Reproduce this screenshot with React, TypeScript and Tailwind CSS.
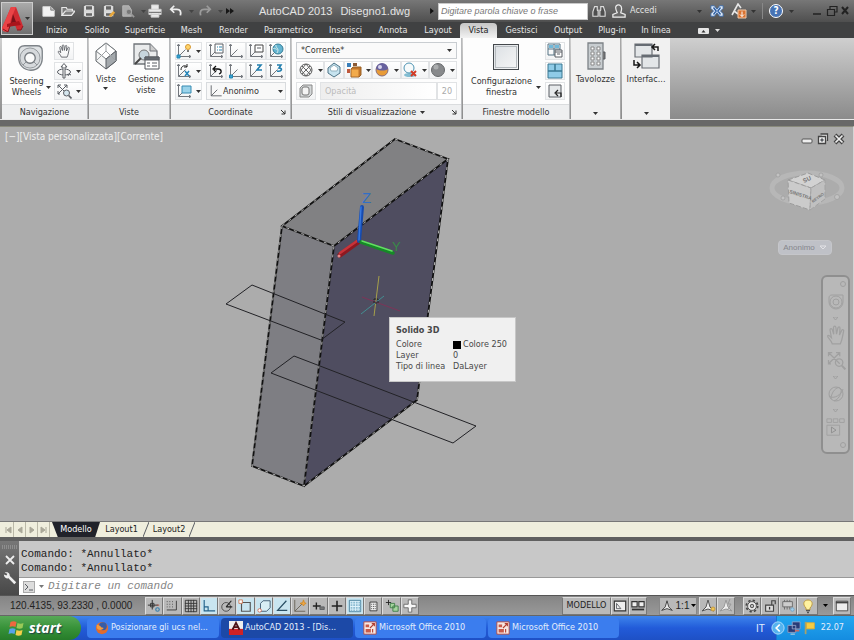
import type { ReactNode } from 'react';
import clsx from 'clsx';

const ui = 'font-["DejaVu_Sans_Condensed","DejaVu_Sans",sans-serif]';

const menuTabs = [
  { label: 'Inizio', width: 'w-[39px]' },
  { label: 'Solido', width: 'w-[42px]' },
  { label: 'Superficie', width: 'w-[54px]' },
  { label: 'Mesh', width: 'w-[39px]' },
  { label: 'Render', width: 'w-[45px]' },
  { label: 'Parametrico', width: 'w-[65px]' },
  { label: 'Inserisci', width: 'w-[49px]' },
  { label: 'Annota', width: 'w-[46px]' },
  { label: 'Layout', width: 'w-[44px]' },
  { label: 'Vista', width: 'w-[37px]', active: true },
  { label: 'Gestisci', width: 'w-[49px]' },
  { label: 'Output', width: 'w-[44px]' },
  { label: 'Plug-in', width: 'w-[44px]' },
  { label: 'In linea', width: 'w-[44px]' },
];

function Svg({ size = 'size-4', box = '0 0 16 16', children }: { size?: string; box?: string; children: ReactNode }) {
  return (
    <svg viewBox={box} className={clsx('block shrink-0', size)} fill="none" stroke="#5a5e64" strokeWidth="1">
      {children}
    </svg>
  );
}

function Caret({ className = 'text-[#333]' }: { className?: string }) {
  return (
    <svg viewBox="0 0 5 3" className={clsx('block h-[3px] w-[5px] shrink-0', className)}>
      <path d="M0 0h5L2.5 3z" fill="currentColor" />
    </svg>
  );
}

/* ---------- small drawings ---------- */

const Axes = ({ children }: { children?: ReactNode }) => (
  <Svg>
    <path d="M2.5 1.5v12h12M2.5 13.5l7-7M1.2 3l1.3-2 1.3 2M13 12.2l2 1.3-2 1.3" stroke="#73777d" />
    {children}
  </Svg>
);

const Hand = () => (
  <path d="M5 15C4 12 1 10 1.3 8.7c.6-1 2 .2 3 1.3L3.2 4c0-1.4 1.5-1.5 1.9-.2L6.2 7.5 6 2c.2-1.4 1.7-1.4 1.9 0l.5 5.3L9.5 2.4c.4-1.3 1.8-1 1.7.3L10.8 8l1.8-3.8c.6-1 1.8-.4 1.5.7C13.2 9 13 12 11.5 15z" />
);

const Wheel = () => (
  <>
    <path d="M3 15V9c0-5 2-7 7-7h14c4 0 6 2 6 6v8c0 8-5 14-13 14C9 30 3 24 3 15z" fill="#dfe2e4" stroke="#7d8287" strokeWidth="1.5" />
    <circle cx="16" cy="16" r="11.5" fill="#d6d9dc" stroke="#8b9095" />
    <circle cx="16" cy="16" r="6" fill="#fafafa" stroke="#74797e" strokeWidth="1.5" />
    <path d="m8 24 4-4m8 0 4 4" stroke="#868b90" />
  </>
);

const ZoomExtents = () => (
  <>
    <path d="m2 2 9 9M11 2 2 11M2 5V2h3M8 2h3v3M2 8v3h2" />
    <circle cx="10.5" cy="10" r="3" fill="#d5e6ee" />
    <path d="m12.7 12.5 2.8 3" strokeWidth="1.6" />
  </>
);

const Orbit = () => (
  <>
    <ellipse cx="8" cy="9" rx="6.5" ry="3" />
    <path d="M7 15V4H5l3-3.5L11 4H9v11z" fill="#fff" />
    <path d="m12 13 1-2 2 1" />
  </>
);

function IconButton({ label, children, className, caret }: { label: string; children: ReactNode; className?: string; caret?: boolean }) {
  return (
    <button
      aria-label={label}
      className={clsx('flex h-[18px] items-center justify-center gap-1 border border-[#e1e3e5] bg-gradient-to-b from-white to-[#f2f3f4]', className)}
    >
      {children}
      {caret && <Caret />}
    </button>
  );
}

function Panel({ title, width, children, arrow, launcher }: { title: string; width: string; children: ReactNode; arrow?: boolean; launcher?: boolean }) {
  return (
    <section className={clsx('flex shrink-0 flex-col border-r border-[#b7b9bb] bg-[#fdfdfd]', width)}>
      <div className="flex flex-1 px-1 pt-1">{children}</div>
      <h2 className="relative flex h-[15px] items-center justify-center border-t border-[#dadcde] bg-[#eeeff0] text-[#333]">
        {title}
        {arrow && <Caret className="ml-1" />}
        {launcher && (
          <button aria-label={`Opzioni ${title}`} className="absolute right-1 bottom-1">
            <Svg size="size-1.5" box="0 0 6 6">
              <path d="m1 1 4 4M5 1.5V5H1.5" stroke="#333" />
            </Svg>
          </button>
        )}
      </h2>
    </section>
  );
}

function TitleBar() {
  return (
    <header className="flex h-[22px] items-center bg-gradient-to-b from-[#777] to-[#4f4f4f] pl-[42px] text-[#e4e4e4]">
      <div className="flex w-[202px] items-center">
        <button aria-label="Nuovo" className="w-[19px]">
          <Svg size="size-3.5"><path d="M1 3h9l4 4v7H1z" fill="#f2f2f2" stroke="#ddd" /><path d="M10 3v4h4" fill="#bbb" stroke="#777" /></Svg>
        </button>
        <button aria-label="Apri" className="w-[21px]">
          <Svg size="size-3.5"><path d="M1 13V4h5l1 2h6v2M1 13l4-5h11l-4 5z" fill="#7c7c7c" stroke="#e8e8e8" strokeWidth="1.4" /></Svg>
        </button>
        <button aria-label="Salva" className="w-[20px]">
          <Svg size="size-3.5"><path d="M1.5 1.5h13v13h-13z" fill="#d8d8d8" stroke="#555" /><path d="M4 2h8v5H4zM4 10h8v4H4z" fill="#666" stroke="#eee" /></Svg>
        </button>
        <button aria-label="Salva con nome" className="w-[19px]">
          <Svg size="size-3.5"><path d="M1.5 1.5h12v13h-12z" fill="#d8d8d8" stroke="#555" /><path d="M4 2h7v5H4zM4 10h7v4H4z" fill="#666" stroke="#eee" /><path d="m9 14 5-5" stroke="#e7a73c" strokeWidth="3" /></Svg>
        </button>
        <button aria-label="Apri da dispositivo" className="flex w-[27px] items-center gap-1.5">
          <Svg size="size-3.5"><path d="M2 2h7l3 5v7H2z" fill="#aaa" stroke="#bbb" /><circle cx="9" cy="9" r="3" fill="#777" stroke="#aaa" /><path d="m11 11 4 4" stroke="#999" strokeWidth="2" /></Svg>
          <Caret className="text-[#444]" />
        </button>
        <button aria-label="Stampa" className="w-[21px]">
          <Svg size="size-3.5"><path d="M4 6V1h8v5M1 6h14v6H1zM3.5 10h9v5h-9z" fill="#e9e9e9" stroke="#ccc" /><path d="M1 9.5h14" stroke="#555" /></Svg>
        </button>
        <button aria-label="Annulla" className="flex w-[29px] items-center gap-1.5">
          <Svg size="size-3.5"><path d="M3 6h6c4 0 5 3 4 7M6 2 2 6l4 4" stroke="#eee" strokeWidth="2" /></Svg>
          <Caret className="text-[#444]" />
        </button>
        <button aria-label="Ripeti" className="flex w-[28px] items-center gap-1.5">
          <Svg size="size-3.5"><path d="M13 6H7c-4 0-5 3-4 7m7-11 4 4-4 4" stroke="#9b9b9b" strokeWidth="2" /></Svg>
          <Caret className="text-[#444]" />
        </button>
        <button aria-label="Altri comandi" className="w-[16px]">
          <Svg size="size-2" box="0 0 8 8"><path d="m0 1 4 3-4 3zM4 1l4 3-4 3z" fill="#161616" stroke="none" /></Svg>
        </button>
      </div>
      <div className='ml-[15px] flex w-[179px] items-center font-["Liberation_Sans",sans-serif] text-[11px] whitespace-nowrap'>
        <span>AutoCAD 2013</span>
        <span className="ml-2">Disegno1.dwg</span>
        <svg viewBox="0 0 5 8" className="mr-1 ml-auto h-1.5 w-1"><path d="M0 0l5 4-5 4z" fill="#111" /></svg>
      </div>
      <input
        aria-label="Cerca"
        placeholder="Digitare parola chiave o frase"
        className='h-[17px] w-[150px] border border-[#c9c9c9] bg-white px-0.5 font-["Liberation_Sans",sans-serif] text-[9px] italic placeholder:text-[#777]'
      />
      <button aria-label="Trova" className="ml-1">
        <Svg size="h-4 w-3.5"><path d="M3 3h3v4l1 1v6H1V9zM10 3h3l2 6v5H9V8l1-1z" fill="#4e4e4e" stroke="#ddd" strokeWidth="1.3" /><path d="M7 7h2" stroke="#ddd" /></Svg>
      </button>
      <button className="ml-1.5 flex items-center gap-1">
        <Svg size="size-3.5"><path d="M5 2c2-2 6-1 6 3 0 3-1 4-1 5l5 2v3H1v-3l5-2C5 8 3 4 5 2z" fill="#6a6a6a" stroke="#eee" strokeWidth="1.4" /></Svg>
        Accedi
      </button>
      <div className="ml-auto flex items-center">
        <Caret className="mr-2 text-[#333]" />
        <button aria-label="Exchange" className="w-[21px]">
          <Svg size="size-3.5"><path d="M1 2h4l3 4 3-4h4v3l-3 3 3 3v3h-4l-3-4-3 4H1v-3l3-3-3-3z" fill="#dfe9f5" stroke="#3868a8" /><path d="m4 4 3 4-3 4M12 4 9 8l3 4" stroke="#2a5da4" strokeWidth="1.6" /></Svg>
        </button>
        <button aria-label="Connessione" className="flex w-[25px] items-center gap-1">
          <Svg><path d="M1 12 7 1l3 4M3 8l4 3" stroke="#e7e7e7" strokeWidth="1.6" /><path d="M7 7h8v8H7z" fill="#db7330" stroke="#f2c9a8" /><path d="M11 8.5v5m-2-2 2 2 2-2" stroke="#fff" /></Svg>
          <Caret />
        </button>
        <span className="mx-1.5 h-4 border-l border-[#888]" />
        <button aria-label="Guida" className="flex w-[43px] items-center gap-1.5">
          <span className="flex size-3.5 items-center justify-center rounded-full border border-white bg-[#4773b4] text-[10px] leading-none font-bold text-white">?</span>
          <Caret />
        </button>
        <button aria-label="Riduci a icona" className="w-[14px]"><Svg size="size-3" box="0 0 12 12"><path d="M1 9h8" stroke="#222" strokeWidth="1.5" /></Svg></button>
        <button aria-label="Ripristina" className="w-[14px]"><Svg size="size-3" box="0 0 12 12"><path d="M4 4V1.5h7V7H8.5M1.5 4.5h7v6h-7z" stroke="#222" strokeWidth="1.2" /></Svg></button>
        <button aria-label="Chiudi" className="w-[14px]"><Svg size="size-3" box="0 0 12 12"><path d="m2 2 6 7m0-7L2 9" stroke="#222" strokeWidth="2" /></Svg></button>
      </div>
    </header>
  );
}

function MenuBar() {
  return (
    <nav className="flex h-4 items-end bg-[#404142] pl-[37px] text-[#e5e5e5]">
      {menuTabs.map((tab) => (
        <button
          key={tab.label}
          className={clsx('flex h-[15px] shrink-0 items-center justify-center whitespace-nowrap', tab.width, tab.active && 'rounded-t-sm bg-gradient-to-b from-[#c6c6c6] to-[#f2f2f2] text-[#222]')}
        >
          {tab.label}
        </button>
      ))}
      <button aria-label="Riduci barra multifunzione" className="ml-5 flex h-[15px] items-center gap-1.5">
        <Svg size="h-1.5 w-[11px]" box="0 0 11 6"><rect width="11" height="6" rx="1" fill="#e6e6e6" stroke="none" /><path d="M3.5 4.5h4L5.5 2z" fill="#333" stroke="none" /></Svg>
        <Caret className="text-[#ddd]" />
      </button>
    </nav>
  );
}

function Ribbon() {
  return (
    <div className="flex h-[82px] gap-px border-b border-[#e8e8e8] bg-gradient-to-b from-[#cfcfcf] to-[#8b8b8b] pl-0.5 leading-[11px] text-[#333]">
      <Panel title="Navigazione" width="w-[86px]">
        <button className="flex w-[50px] flex-col items-center pt-0.5">
          <Svg size="size-7" box="0 0 32 32"><Wheel /></Svg>
          <span className="mt-1 flex items-center gap-0.5">
            <span>Steering<br />Wheels</span>
            <Caret />
          </span>
        </button>
        <div className="flex w-[29px] flex-col gap-0.5">
          <IconButton label="Pan" className="w-5"><Svg size="size-3.5"><Hand /></Svg></IconButton>
          <IconButton label="Orbita" className="w-[29px]" caret><Svg><Orbit /></Svg></IconButton>
          <IconButton label="Zoom" className="w-[29px]" caret><Svg><ZoomExtents /></Svg></IconButton>
        </div>
      </Panel>

      <Panel title="Viste" width="w-[81px]">
        <button className="flex w-[27px] flex-col items-center">
          <Svg size="h-7 w-6" box="0 0 24 28">
            <path d="M12 1 2 9v10l10 8 10-8V9z" fill="#f4f5f5" stroke="#5b6064" />
            <path d="M12 1 2 9l10 8 10-8z" fill="#fff" stroke="#777c80" />
            <path d="M12 17v10l10-8V9z" fill="#a4a9ad" />
            <path d="M12 1v8L2 19M12 9l10 10" stroke="#9da1a4" />
          </Svg>
          <span className="mt-1">Viste</span>
          <Caret className="mt-0.5" />
        </button>
        <button className="ml-2 flex w-10 flex-col items-center">
          <Svg size="size-7" box="0 0 28 28">
            <path d="M2 2h16l7 7v13H2z" fill="#e9ebec" stroke="#70757a" strokeWidth="1.3" />
            <path d="M18 2v7h7" fill="#ccc" stroke="#70757a" />
            <circle cx="12" cy="13" r="5" fill="#c6d5dd" stroke="#777" />
            <path d="m9 16-6 6" stroke="#444" strokeWidth="2" />
            <path d="M13 15h14v12H13z" fill="#fff" stroke="#4e5358" />
            <path d="M13 15h14v3H13z" fill="#646a70" />
            <path d="M15 21h3m2 0h5m-10 3h3m2 0h5" />
          </Svg>
          <span className="mt-1 text-center">Gestione<br />viste</span>
        </button>
      </Panel>

      <Panel title="Coordinate" width="w-[120px]" launcher>
        <div className="flex w-[28px] flex-col gap-0.5">
          <IconButton label="Icona UCS" caret><Axes><path d="M1 12h3v3H1z" fill="#39a3d2" stroke="#2387b5" /><circle cx="12" cy="4" r="2.5" fill="#ffd56c" stroke="#d69833" /><path d="M11 7h2v2h-2z" fill="#777" stroke="none" /></Axes></IconButton>
          <IconButton label="Ruota X" caret><Axes><path d="M5 7c0-5 5-5 6-3m-3 0h3V1" stroke="#222" /><path d="m9 8 4 5m0-5-4 5" stroke="#2384b9" strokeWidth="1.5" /></Axes></IconButton>
          <IconButton label="Vista UCS" caret><Axes><path d="M6 3h9v7H6z" fill="#9bd3ea" stroke="#378bb2" /></Axes></IconButton>
        </div>
        <div className="ml-1 flex flex-1 flex-col gap-0.5">
          <div className="flex justify-between">
            <IconButton label="UCS con nome" className="w-5"><Axes><path d="M7 1h8v9H7z" fill="#fff" /><path d="M9 4h1m1 0h3M9 7h1m1 0h3" stroke="#2b83ad" /></Axes></IconButton>
            <div className="flex">
              <IconButton label="UCS" className="w-5"><Axes /></IconButton>
              <IconButton label="UCS origine" className="w-5"><Axes><path d="M7 2h8v7H7z" fill="#fff" stroke="#444" /><path d="M9 5h4" /></Axes></IconButton>
              <IconButton label="Globale" className="w-5"><Axes><circle cx="10" cy="6" r="5" fill="#64b4d1" stroke="#347c95" /><path d="M8 2c-1 3 4 3 1 8M5 6c2-2 3 1 4 0" stroke="#d7eeeb" /></Axes></IconButton>
            </div>
          </div>
          <div className="flex justify-between">
            <IconButton label="UCS precedente" className="w-5"><Axes><path d="M6 6h4c4 0 4 4 1 5M8 3 5 6l3 3" stroke="#111" strokeWidth="1.3" /></Axes></IconButton>
            <div className="flex">
              <IconButton label="Origine" className="w-5"><Axes><path d="M1.5 12h3v3h-3z" fill="#39a3d2" stroke="#2387b5" /></Axes></IconButton>
              <IconButton label="Asse Z" className="w-5"><Axes><path d="M9 2h4L9 7h5" stroke="#227ead" strokeWidth="1.6" /></Axes></IconButton>
              <IconButton label="3 punti" className="w-5"><Axes><path d="M9 2h4l-2 3c4 0 3 4-2 3" stroke="#227ead" strokeWidth="1.6" /></Axes></IconButton>
            </div>
          </div>
          <div className="flex h-[18px] items-center border border-[#d8dbde] bg-[#f8f8f8] px-0.5">
            <Svg size="size-3.5"><path d="M2.5 1.5v12h12M2.5 13.5l7-7" /></Svg>
            <select aria-label="UCS corrente" className="min-w-0 flex-1 appearance-none bg-transparent"><option>Anonimo</option></select>
            <Caret />
          </div>
        </div>
      </Panel>

      <Panel title="Stili di visualizzazione" width="w-[170px]" arrow launcher>
        <div className="flex flex-1 flex-col gap-0.5">
          <div className="flex h-[17px] items-center border border-[#c9cdd1] bg-[#fafafa] px-1">
            <select aria-label="Stile di visualizzazione" className="flex-1 appearance-none bg-transparent"><option>*Corrente*</option></select>
            <Caret />
          </div>
          <div className="flex h-[19px]">
            <IconButton label="Raggi X" className="flex-1" caret><Svg><circle cx="8" cy="8" r="6" stroke="#555" /><path d="M8 2 3 8l5 6 5-6zM4 4l8 8m0-8-8 8" stroke="#666" /></Svg></IconButton>
            <IconButton label="Isolinee" className="w-5"><Svg><path d="m8 1 6 4v6l-6 4-6-4V6z" fill="#c6e3ef" stroke="#4d7386" /><path d="m4 6 4-3 4 3-1 3H5z" fill="#fff" stroke="#93b3c1" /></Svg></IconButton>
            <IconButton label="Colori faccia" className="flex-1" caret><Svg><path d="M1 1h4v4H1z" fill="#397fba" stroke="none" /><path d="M7 1h4v3H7z" fill="#8a5a36" stroke="none" /><path d="M1 7h3v4H1z" fill="#be583c" stroke="none" /><path d="m5 7 2-2h8v8l-2 2H5z" fill="#c0752b" stroke="#9a6327" /><path d="M5.5 7.500h7v7h-7z" fill="#f2ab4c" stroke="none" /></Svg></IconButton>
            <IconButton label="Materiali" className="flex-1" caret><Svg><circle cx="8" cy="8" r="6" fill="#e89b37" stroke="#896d77" /><path d="M2 7a6 6 0 0 1 12 0c-3 2-8 2-12 0z" fill="#68629f" stroke="none" /><circle cx="6" cy="5" r="2" fill="#d8d5ed" stroke="none" /></Svg></IconButton>
            <IconButton label="Ombre" className="flex-1" caret><Svg><ellipse cx="8" cy="13" rx="6" ry="2" fill="#82bdd2" stroke="none" /><circle cx="7" cy="6" r="5" fill="#f6fafb" stroke="#4d93b2" /><path d="m9 9 5 5m0-5-5 5" stroke="#d33b25" strokeWidth="2" /></Svg></IconButton>
            <IconButton label="Riflessi" className="flex-1" caret><Svg><circle cx="8" cy="8" r="6.5" fill="#888a8c" stroke="#66696b" /><circle cx="6" cy="5" r="2.5" fill="#acaeaf" stroke="none" /></Svg></IconButton>
          </div>
          <div className="flex h-[18px] gap-1">
            <IconButton label="Trasparenza" className="w-5"><Svg><path d="m2 5 3-3h9v9l-3 3H2z" fill="#d4d7d8" stroke="#888" /><rect x="4" y="4" width="7" height="8" rx="2" fill="#f4f4f4" stroke="#777" /></Svg></IconButton>
            <label htmlFor="opacity" className="flex flex-1 items-center border border-[#e1e3e5] bg-gradient-to-r from-[#eee] to-white pl-1 text-[#bbb]">Opacità</label>
            <input id="opacity" defaultValue="20" className="-ml-1 w-5 border border-[#e1e3e5] bg-white text-center text-[#aaa]" />
          </div>
        </div>
      </Panel>

      <Panel title="Finestre modello" width="w-[107px]">
        <button className="flex flex-1 flex-col items-center pt-0.5">
          <span className="size-[26px] border border-[#44484c] bg-gradient-to-br from-[#dce0e4] to-[#f6f6f6] outline-1 -outline-offset-3 outline-[#b5babe]" />
          <span className="mt-1.5 flex items-center gap-1">
            <span className="text-center">Configurazione<br />finestra</span>
            <Caret />
          </span>
        </button>
        <div className="flex w-[20px] flex-col gap-0.5">
          <IconButton label="Con nome"><Svg><path d="M1 1h12v11H1zM1 6h12M7 1v11" stroke="#547383" /><path d="M2 2h4v3H2zM8 2h4v3H8z" fill="#72b8d8" stroke="none" /><path d="M8 7h7v7H8z" fill="#fff" /><path d="M8 9h7m-5 2h3" /></Svg></IconButton>
          <IconButton label="Unisci"><Svg><path d="M1 1h14v14H1z" fill="#8fcbe7" stroke="#3a7893" /><path d="M1 8h14M8 1v7" stroke="#3a7893" strokeWidth="1.5" /></Svg></IconButton>
          <IconButton label="Ripristina"><Svg><path d="M2 2h12v12H2z" fill="#e6e9eb" /><path d="M9 10h5v4M11 7l-3 3 3 3" stroke="#222" strokeWidth="1.2" /></Svg></IconButton>
        </div>
      </Panel>

      <button className="flex w-[50px] shrink-0 flex-col items-center border-r border-[#a7a7a7] bg-[#f1f1f1] pt-1 pb-1">
        <Svg size="h-7 w-5" box="0 0 20 28">
          <path d="M2 1h15v26H2z" fill="#c8cdd0" stroke="#7d8387" strokeWidth="1.3" /><path d="M17 10h2v7h-2" fill="#777" />
          <path d="M5 5h3v3H5zm6 0h3v3h-3zM5 10h3v3H5zm6 0h3v3h-3zM5 15h3v3H5zm6 0h3v3h-3zM5 20h3v3H5zm6 0h3v3h-3z" fill="#fff" stroke="#888" />
        </Svg>
        <span className="mt-1">Tavolozze</span>
        <span className="mt-auto"><Caret /></span>
      </button>
      <button className="flex w-[48px] shrink-0 flex-col items-center bg-[#f1f1f1] pt-1 pb-1">
        <Svg size="size-7" box="0 0 28 28">
          <path d="M3 2h17v13H3zM10 13h17v13H10z" fill="#e3e6e8" stroke="#6a6f75" strokeWidth="1.2" />
          <path d="M3 2h17v2H3zM10 13h17v2H10z" fill="#666c73" stroke="none" />
          <path d="M26 9V5h-5m2-3-3 3 3 3M2 18v5h5m-2-3 3 3-3 3" stroke="#171717" strokeWidth="1.5" />
        </Svg>
        <span className="mt-1">Interfac...</span>
        <span className="mt-auto"><Caret /></span>
      </button>
    </div>
  );
}

function SolidDrawing() {
  return (
    <svg viewBox="0 127 854 394" className="absolute top-0 left-0 h-[394px] w-[854px]" fill="none">
      <path d="M395 139 448 159 334 246 282 226z" fill="#818183" />
      <path d="m282 226 52 20-30 240-52-20z" fill="#7e7e83" />
      <path d="M334 246 448 159 417 400 304 486z" fill="#4f4d60" />
      <g stroke="#111" strokeWidth="1.8">
        <path d="M395 139 448 159 334 246 282 226z" />
        <path d="m282 226-30 240 52 20 30-240M448 159l-31 241-113 86" />
      </g>
      <g stroke="#dedede" strokeWidth="0.8" strokeDasharray="3 5">
        <path d="M395 139 448 159 334 246 282 226z" />
        <path d="m282 226-30 240 52 20 30-240M448 159l-31 241-113 86" />
      </g>
      <g stroke="#222226">
        <path d="m226 304 26-19 93 37-24 18z" />
        <path d="m271 373 23-17 182 70-23 17z" />
      </g>
      <g strokeLinecap="round">
        <path d="m358 242-18 13" stroke="#8e1820" strokeWidth="5" />
        <path d="m357 241-17 12" stroke="#c83339" strokeWidth="2.5" />
        <circle cx="339" cy="256" r="1.5" fill="#e58b8b" />
        <path d="m359 241 3-34" stroke="#164bb0" strokeWidth="4" />
        <path d="m359 240 2-33" stroke="#3778df" strokeWidth="1.5" />
        <path d="m361 242 32 11" stroke="#168927" strokeWidth="3.500" />
        <path d="m362 241 30 10" stroke="#63df62" strokeWidth="1.5" />
      </g>
      <text x="362" y="203" fill="#316fc5" fontFamily="Liberation Sans, sans-serif" fontSize="15">Z</text>
      <text x="392" y="251" fill="#398a48" fontFamily="Liberation Sans, sans-serif" fontSize="13">Y</text>
      <path d="m379 276-5 40" stroke="#a6a04a" />
      <path d="m361 314 23-18" stroke="#438f92" />
      <path d="m362 297 38 14" stroke="#7d3458" />
      <path d="M374 299h4v4h-4z" stroke="#222" strokeDasharray="2 1" />
    </svg>
  );
}

function ViewCube() {
  return (
    <svg viewBox="0 0 80 60" className="absolute top-[33px] right-[6px] h-[60px] w-20" fill="none">
      <ellipse cx="40" cy="28" rx="35" ry="15" stroke="#b7b7b7" strokeWidth="5" />
      <path d="m21 20 20-7 17 7v19l-15 11-21-7z" fill="#c9c9c9" />
      <path d="m21 20 20-7 17 7-14 8z" fill="#d2d2d2" stroke="#9c9c9c" strokeDasharray="5 2" />
      <path d="m21 20 23 8-1 22-21-7z" fill="#cbcbcb" stroke="#9c9c9c" strokeDasharray="5 2" />
      <path d="m44 28 14-8v19L43 50z" fill="#c0c0c0" stroke="#a2a2a2" strokeDasharray="5 2" />
      <g fill="#777" fontFamily="Liberation Sans, sans-serif" fontWeight="bold">
        <text x="22" y="33" fontSize="5" transform="rotate(18 22 33)">SINISTRA</text>
        <text x="46" y="43" fontSize="4" transform="rotate(-36 46 43)">RETRO</text>
        <text x="37" y="23" fontSize="6" transform="rotate(-25 37 23)">SU</text>
      </g>
      <g fill="#c2c2c2" stroke="#9c9c9c" strokeWidth="0.7">
        <circle cx="11" cy="15" r="2" /><circle cx="54" cy="15" r="2" /><circle cx="70" cy="37" r="2.5" /><circle cx="16" cy="38" r="2" />
      </g>
    </svg>
  );
}

function NavigationBar() {
  return (
    <div className="absolute top-[148px] right-[3px] flex h-[179px] w-[29px] flex-col items-center justify-between rounded-md border-2 border-[#8f8f8f] bg-[#b8b8b8] py-1 [&_circle]:fill-none [&_path]:fill-none [&_svg]:stroke-[#a0a0a0]">
      <button aria-label="Chiudi barra" className="mr-0.5 self-end"><Svg size="size-1.5" box="0 0 6 6"><circle cx="3" cy="3" r="2.5" /></Svg></button>
      <button aria-label="Steering Wheels"><Svg size="size-5" box="0 0 20 20"><path d="M3 10V6c0-2 1-3 3-3h11v7a7 7 0 1 1-14 0z" /><circle cx="10" cy="10" r="6" /><circle cx="10" cy="10" r="3" /></Svg></button>
      <Caret className="text-[#999]" />
      <button aria-label="Pan barra"><Svg size="size-5"><Hand /></Svg></button>
      <button aria-label="Zoom barra"><Svg size="size-5"><ZoomExtents /></Svg></button>
      <Caret className="text-[#999]" />
      <button aria-label="Orbita barra"><Svg size="size-5" box="0 0 20 20"><circle cx="10" cy="10" r="7" /><path d="M3 12c5 4 13-2 14-7M5 15c0-7 6-13 9-11s0 11-6 13" /></Svg></button>
      <Caret className="text-[#999]" />
      <button aria-label="ShowMotion"><Svg size="size-5" box="0 0 22 22"><path d="M1 2h5v4H1zM8 2h5v4H8zM15 2h5v4h-5zM1 9h14v11H1z" /><path d="m6 11 5 3.5-5 3z" stroke="#8d8d8d" /></Svg></button>
      <button aria-label="Opzioni barra" className="mr-0.5 self-end"><Svg size="size-1.5" box="0 0 6 6"><circle cx="3" cy="3" r="2.5" /></Svg></button>
    </div>
  );
}

function Viewport() {
  return (
    <main className="relative min-h-[394px] flex-1 overflow-hidden border-t border-r border-[#898a7c] border-r-[#d5d5d5] bg-[#acacac]">
      <SolidDrawing />
      <p className="absolute top-0.5 left-[5px] text-[10px] text-[#f0f0f0]">[−][Vista personalizzata][Corrente]</p>
      <div className="absolute top-1.5 right-2 flex gap-1">
        <button aria-label="Riduci finestra"><Svg size="size-3" box="0 0 12 12"><rect x="1" y="6" width="10" height="4" rx="1" fill="#eee" stroke="#555" /></Svg></button>
        <button aria-label="Ripristina finestra"><Svg size="size-3" box="0 0 12 12"><path d="M3.5 1h7v7M1.5 3.5h7v7h-7z" fill="#eee" stroke="#444" strokeWidth="1.3" /><path d="M4 6h2v2H4z" fill="#555" /></Svg></button>
        <button aria-label="Chiudi finestra"><Svg size="size-3" box="0 0 12 12"><path d="m2 2 8 8m0-8-8 8" stroke="#444" strokeWidth="4" /><path d="m2.5 2.5 7 7m0-7-7 7" stroke="#eee" strokeWidth="1.7" /></Svg></button>
      </div>
      <ViewCube />
      <button className='absolute top-[113px] right-[21px] flex h-[15px] w-[54px] items-center justify-center gap-1 rounded-sm border border-[#c5c6ca] bg-[#bfc1c7] font-["Liberation_Sans",sans-serif] text-[8px] text-[#85868c]'>
        Anonimo <Svg size="h-1.5 w-2" box="0 0 8 6"><path d="M1 1h6L4 4z" stroke="#e2e2e6" /></Svg>
      </button>
      <NavigationBar />
      <div className="absolute top-[190px] left-[389px] h-[65px] w-[127px] border border-[#c7c7c7] bg-[#f0f0f0] px-1.5 pt-1.5 text-[#484848]">
        <h3 className="mb-0.5 leading-[13px] font-bold">Solido 3D</h3>
        <dl className="grid grid-cols-[57px_1fr] leading-[11px] whitespace-nowrap">
          <dt>Colore</dt>
          <dd className="flex items-center gap-0.5"><span className="size-2 bg-black" />Colore 250</dd>
          <dt>Layer</dt>
          <dd>0</dd>
          <dt>Tipo di linea</dt>
          <dd>DaLayer</dd>
        </dl>
      </div>
    </main>
  );
}

function LayoutTabs() {
  return (
    <nav className="flex h-4 shrink-0 items-stretch border-t border-[#777] bg-[#efeedd] pl-[2px] text-[#222]">
      {['m7 1-4 3 4 3zM2 1v6', 'm6 1-4 3 4 3z', 'm2 1 4 3-4 3z', 'm1 1 4 3-4 3zM6 1v6'].map((d, i) => (
        <button key={d} aria-label={['Primo', 'Precedente', 'Successivo', 'Ultimo'][i]} className="flex w-3 items-center justify-center border-r border-[#bbb9a8]">
          <Svg size="size-2" box="0 0 8 8"><path d={d} fill="#aaa899" stroke="#aaa899" /></Svg>
        </button>
      ))}
      <button className="ml-0.5 w-12 bg-[#20222a] text-white [clip-path:polygon(0_0,100%_0,90%_100%,12%_100%)]">Modello</button>
      <button className="w-[43px]">Layout1</button>
      <Svg size="h-[15px] w-1.5" box="0 0 6 15"><path d="M6 0 0 15" /></Svg>
      <button className="w-[40px]">Layout2</button>
      <Svg size="h-[15px] w-1.5" box="0 0 6 15"><path d="M6 0 0 15" /></Svg>
    </nav>
  );
}

function CommandLine() {
  return (
    <section className='flex h-[59px] shrink-0 border-t-4 border-b border-t-[#606060] border-b-[#555] bg-[#c8c8c8] font-["Liberation_Mono",monospace] text-[11px] text-[#222]'>
      <div className="flex w-[19px] flex-col items-center gap-1.5 bg-gradient-to-b from-[#777] to-[#484848] pt-1">
        <Svg size="h-1 w-4" box="0 0 16 4"><path d="M0 1h16M0 3h16" stroke="#aaa" strokeDasharray="1 1" /></Svg>
        <button aria-label="Chiudi riga di comando"><Svg size="size-2.5" box="0 0 10 10"><path d="m1 1 8 8m0-8L1 9" stroke="#eee" strokeWidth="1.8" /></Svg></button>
        <button aria-label="Personalizza"><Svg size="size-3.5"><path d="M5 5 14 14" stroke="#eee" strokeWidth="3" /><path d="M2 2c4-2 7 2 5 5S1 8 1 4l3 1 1-2z" fill="#eee" stroke="none" /></Svg></button>
      </div>
      <div className="flex flex-1 flex-col">
        <div className="flex-1 px-0.5 pt-1.5 leading-[14px]">
          <p>Comando: *Annullato*</p>
          <p>Comando: *Annullato*</p>
        </div>
        <div className="flex h-[18px] items-center border-t border-[#999] bg-white px-1">
          <span className="flex h-3 w-3 items-center justify-center border border-[#aaa] bg-[#ddd]"><Svg size="size-2.5" box="0 0 10 10"><path d="m1 2 3 3-3 3m4 0h4" /></Svg></span>
          <span className="mx-1"><Caret className="text-[#777]" /></span>
          <input aria-label="Comando" placeholder="Digitare un comando" className="flex-1 italic placeholder:text-[#858585]" />
        </div>
      </div>
    </section>
  );
}

const statusIcons: { label: string; on?: boolean; icon: ReactNode }[] = [
  { label: 'Deduci vincoli', icon: <><path d="M1 7h12M6 1v11" stroke="#222" /><path d="M4 5h4v4H4z" stroke="#333" /><circle cx="12" cy="12" r="2" stroke="#357fae" strokeWidth="1.3" /><path d="M11 7h3" stroke="#bd5a48" /></> },
  { label: 'Snap', icon: <><path d="M2 3h9M2 6h9M2 9h9" stroke="#444" strokeDasharray="1 2" /><path d="M2 12.5h11V2" stroke="#333" /></> },
  { label: 'Griglia', icon: <path d="M1.5 1.5h13v13h-13zM1 5h14M1 8h14M1 11h14M5 1v14M8 1v14M11 1v14" stroke="#333" /> },
  { label: 'Orto', on: true, icon: <path d="M2.5 1v12.5H15M2 9h5v5" stroke="#23628a" strokeWidth="1.3" /> },
  { label: 'Polare', icon: <><circle cx="7" cy="9" r="5" stroke="#444" /><path d="m7 9 6-7M7 9h7" stroke="#222" strokeWidth="1.3" /></> },
  { label: 'Osnap', on: true, icon: <><path d="M4 4h10v10H4z" stroke="#555" strokeWidth="1.3" /><path d="M1 1h4v4H1z" fill="#fff" stroke="#cc7752" /></> },
  { label: 'Osnap 3D', on: true, icon: <><path d="m4 5 3-3h8v8l-4 4H4z" fill="#d8eef4" stroke="#39546a" /><circle cx="3" cy="13" r="2" fill="#fff" stroke="#d06b55" /></> },
  { label: 'Puntamento', on: true, icon: <path d="M13 2 3 13h11" stroke="#294e64" strokeWidth="1.4" /> },
  { label: 'UCS dinamico', icon: <><path d="M2 1v13h12M2 14l9-9" stroke="#665f52" /><path d="m12 1 1 3 2 1-2 1-1 2-1-2-3-1 3-1z" fill="#eda646" stroke="#d28a25" /></> },
  { label: 'Input dinamico', icon: <><path d="M1 8h9M5 4v8" stroke="#222" strokeWidth="1.6" /><path d="M9 9h5v3H9z" fill="#777" /></> },
  { label: 'Spessore', icon: <path d="M2 8h12M8 2v12" stroke="#222" strokeWidth="1.8" /> },
  { label: 'Trasparenza', on: true, icon: <><path d="M1.5 1.5h13v13h-13z" fill="#dff2fb" stroke="#3e7997" /><path d="M3 4h11M3 7h11M3 10h11M3 13h11" stroke="#8dbbd2" strokeWidth="2" strokeDasharray="2 1" /></> },
  { label: 'Proprietà rapide', icon: <><path d="M4.5 3.5h8v10h-8z" fill="#eee" stroke="#333" /><path d="M6 6h5M6 8.500h5M6 11h5" stroke="#333" strokeDasharray="1 1" /></> },
  { label: 'Ciclo selezione', icon: <><path d="M1 4h6M4 1v6" stroke="#222" /><path d="M6 5h5v5H6zM9 8h6v6H9z" fill="#a6d4a0" stroke="#3d7c45" /></> },
  { label: 'Monitor annotazioni', icon: <path d="M6 1h4v5h5v4h-5v5H6v-5H1V6h5z" fill="#f8f8f8" stroke="#666" /> },
];

const Scale = ({ color = '#333' }: { color?: string }) => <path d="m8 2-2 7-4 4 6-2 6 2-4-4z" fill="#eee" stroke={color} />;

function StatusButton({ label, width = 'w-[18px]', children, light }: { label: string; width?: string; children: ReactNode; light?: boolean }) {
  return (
    <button aria-label={label} className={clsx('flex h-[18px] items-center justify-center border border-[#777] border-t-[#ddd] border-l-[#ddd]', width, light ? 'bg-[#c9e5f0]' : 'bg-[#b9b9b9]')}>
      {children}
    </button>
  );
}

function StatusBar() {
  return (
    <div className='flex h-5 shrink-0 items-center border-b border-[#666] bg-gradient-to-b from-[#858585] to-[#999] font-["Liberation_Sans",sans-serif] text-[10px] text-[#222]'>
      <div className="w-[145px] pl-2.5">120.4135, 93.2330 , 0.0000</div>
      <div className="flex w-[274px]">
        {statusIcons.map((item) => (
          <StatusButton key={item.label} label={item.label} width="flex-1" light={item.on}><Svg size="size-3.5">{item.icon}</Svg></StatusButton>
        ))}
      </div>
      <div className="ml-auto flex items-center pr-[3px]">
        <button className={clsx('flex h-[18px] w-[49px] items-center justify-center border border-[#777] border-t-[#ddd] bg-[#b9b9b9] text-[9px]', ui)}>MODELLO</button>
        <StatusButton label="Layout rapido"><Svg size="size-3.5"><path d="M1.5 2.5h13v11h-13z" fill="#eee" stroke="#333" strokeWidth="1.3" /><path d="M4 11V5l5 6z" /></Svg></StatusButton>
        <StatusButton label="Disegni rapidi"><Svg size="size-3.5"><path d="M1 3h6v6H1zM9 3h6v6H9z" fill="#eee" stroke="#333" strokeWidth="1.3" /><path d="M1 12h14" stroke="#333" strokeWidth="2" /></Svg></StatusButton>
        <button className="mr-0.5 ml-[12px] flex h-[18px] w-[38px] items-center justify-center gap-0.5 border border-[#888] bg-[#b9b9b9]"><Svg size="size-3.5"><Scale /></Svg>1:1<Caret className="text-black" /></button>
        <StatusButton label="Visibilità"><Svg><Scale color="#555" /><circle cx="13" cy="11" r="2" fill="#f0c54f" stroke="#c49a45" /></Svg></StatusButton>
        <StatusButton label="Scala automatica"><Svg><Scale color="#999" /><path d="m12 1-2 5h3l-3 5" stroke="#999" /></Svg></StatusButton>
        <span className="w-2" />
        <StatusButton label="Area di lavoro"><Svg size="size-3.5"><circle cx="8" cy="8" r="6.5" stroke="#444" strokeWidth="2" strokeDasharray="2.6 2.5" /><circle cx="8" cy="8" r="5" fill="#eee" stroke="#444" /><circle cx="8" cy="8" r="2" fill="#bbb" stroke="#444" /></Svg></StatusButton>
        <StatusButton label="Blocca"><Svg size="size-3.5"><path d="M10 7V2h4v4" stroke="#444" strokeWidth="1.3" /><path d="M3 7h9v7H3z" fill="#ddd" stroke="#444" strokeWidth="1.3" /><path d="M7.5 9v3" stroke="#333" strokeWidth="1.5" /></Svg></StatusButton>
        <StatusButton label="Hardware"><Svg size="size-3.5"><path d="M2 3h11v6H2z" fill="#ccc" stroke="#666" /><path d="M4 9v3m3-3v3m3-3v3M4 1v2m3-2v2m3-2v2" stroke="#666" /><circle cx="13" cy="12" r="2" fill="#a6cfe9" stroke="#6fa3c6" /></Svg></StatusButton>
        <StatusButton label="Isola oggetti" width="w-[21px]"><Svg><path d="M6 10C2 6 4 2 8 2s6 4 2 8v2H6z" fill="#fff2a0" stroke="#bf9b42" /><path d="M6 12.5h4m-3 2h2" stroke="#555" strokeWidth="1.3" /></Svg></StatusButton>
        <button aria-label="Menu barra di stato" className="flex w-[15px] justify-center"><Caret className="text-black" /></button>
        <StatusButton label="Schermo intero"><Svg size="size-3.5"><path d="M1.5 2.5h13v11h-13z" fill="#eee" stroke="#444" /><path d="M1 4h14" stroke="#444" strokeWidth="2" /></Svg></StatusButton>
      </div>
    </div>
  );
}

function OfficeIcon() {
  return <Svg size="size-3.5"><path d="M1 1h14v14H1z" fill="#f6e8e4" stroke="#b64638" /><path d="M3 4h4v3H3zM3 9h6v4H3z" fill="#c95a49" stroke="none" /><path d="m8 8 5-5m-3 0h3v3M11 9v4" stroke="#b13e31" strokeWidth="1.3" /></Svg>;
}

const tasks: { key: string; label: string; width: string; active?: boolean; icon: ReactNode }[] = [
  { key: 'browser', label: 'Posizionare gli ucs nel...', width: 'w-[132px]', icon: <Svg size="size-3.5"><circle cx="8" cy="8" r="7" fill="#e06c2c" stroke="none" /><circle cx="9" cy="6" r="4.5" fill="#375ca5" stroke="none" /><path d="M2 4c2 1 4 1 5 3l3 1c-2 3-6 3-8 0z" fill="#f39c3f" stroke="none" /></Svg> },
  { key: 'autocad', label: 'AutoCAD 2013 - [Dis...', width: 'w-[132px]', active: true, icon: <Svg size="size-3.5"><path d="M0 0h16v16H0z" fill="#eee" stroke="none" /><path d="M0 9h16v7H0z" fill="#cf2226" stroke="none" /><path d="m4 10 4-8 4 8M6 7h4" stroke="#4b1216" strokeWidth="2" /></Svg> },
  { key: 'office1', label: 'Microsoft Office 2010', width: 'w-[131px]', icon: <OfficeIcon /> },
  { key: 'office2', label: 'Microsoft Office 2010', width: 'w-[131px]', icon: <OfficeIcon /> },
];

function Taskbar() {
  return (
    <footer className="flex h-6 shrink-0 items-stretch bg-gradient-to-b from-[#3f84ec] via-[#225bd9] to-[#1e50c5] text-[#e4eefc]">
      <button className='flex w-[81px] items-center gap-1 rounded-r-xl bg-gradient-to-b from-[#57a957] via-[#379239] to-[#267c29] pl-2 font-["Open_Sans",sans-serif] text-[14px] leading-none font-bold text-white italic [text-shadow:1px_1px_1px_#244]'>
        <Svg size="h-4 w-[17px]"><g stroke="none"><path d="M2 2c2-1 4-1 6 0L7 7C5 6 3 6 1 7z" fill="#ef6840" /><path d="M9 3c2 1 4 1 6 0l-1 5c-2 1-4 1-6 0z" fill="#9ac958" /><path d="M1 9c2-1 4-1 6 0l-1 5c-2-1-4-1-6 0z" fill="#58a3e9" /><path d="M8 10c2 1 4 1 6 0l-1 5c-2 1-4 1-6 0z" fill="#f3cf49" /></g></Svg>
        start
      </button>
      <div className="ml-1.5 flex gap-0.5 py-0.5">
        {tasks.map((task) => (
          <button key={task.key} className={clsx('flex items-center gap-0.5 rounded-sm pl-2 whitespace-nowrap', task.width, task.active ? 'bg-[#1c49a7]' : 'bg-[#3b7dee]')}>
            {task.icon}
            {task.label}
          </button>
        ))}
      </div>
      <div className="ml-auto flex items-center">
        <span className='w-5 font-["Liberation_Sans",sans-serif] text-[10px]'>IT</span>
        <div className="flex h-full w-[78px] items-center gap-0.5 border-l border-[#1677ce] bg-gradient-to-b from-[#24a7f0] to-[#148ce0]">
          <button aria-label="Mostra icone nascoste" className="-ml-1.5 flex size-3.5 items-center justify-center"><Svg size="size-3.5"><circle cx="8" cy="8" r="7" fill="#55b2ee" stroke="#b9e4ff" /><path d="m10 4-4 4 4 4" stroke="#fff" strokeWidth="2" /></Svg></button>
          <Svg size="size-3.5"><path d="M6 1h9v8H6zM1 5h9v8H1z" fill="#273b78" stroke="#93a4c8" /><path d="M4 15h5" stroke="#ddd" /><path d="M9 11h5" stroke="#c96a63" strokeWidth="2" /></Svg>
          <Svg size="size-3.5"><path d="M3 1v14" stroke="#aaa167" strokeWidth="2" /><path d="M4 2h9v7H4z" fill="#f6cc42" stroke="#d9ac36" /></Svg>
          <time className="ml-auto pr-2.5">22.07</time>
        </div>
      </div>
    </footer>
  );
}

export default function App() {
  return (
    <div className={clsx('flex min-h-screen flex-col bg-[#666] text-[9px]', ui)}>
      <div className="relative">
        <TitleBar />
        <MenuBar />
        <button aria-label="Menu applicazione" className="absolute top-0.5 left-px flex h-[33px] w-8 items-center justify-between border border-[#ccc] bg-gradient-to-b from-[#aaa] to-[#707070] pr-0.5">
          <Svg size="h-7 w-[22px]" box="0 0 22 28">
            <path d="M9 2h5l7 19-2 4h-4l-2-5-5 1-3 6-4-1-1-3z" fill="#cf2a31" stroke="none" />
            <path d="M9 2h5l-5 12-3 13-5-1-1-3z" fill="#ea4447" stroke="none" />
            <path d="m11 9 3 8-5 1z" fill="#7a1219" stroke="none" />
            <path d="m5 19 12-3 2 4-14 2z" fill="#a9151c" stroke="none" />
            <path d="m1 24 5 3 2-6m7 4h4l2-4" stroke="#8c161d" />
          </Svg>
          <Caret />
        </button>
      </div>
      <Ribbon />
      <div className="h-1.5 shrink-0 bg-[#686868]" />
      <Viewport />
      <LayoutTabs />
      <CommandLine />
      <StatusBar />
      <Taskbar />
    </div>
  );
}
